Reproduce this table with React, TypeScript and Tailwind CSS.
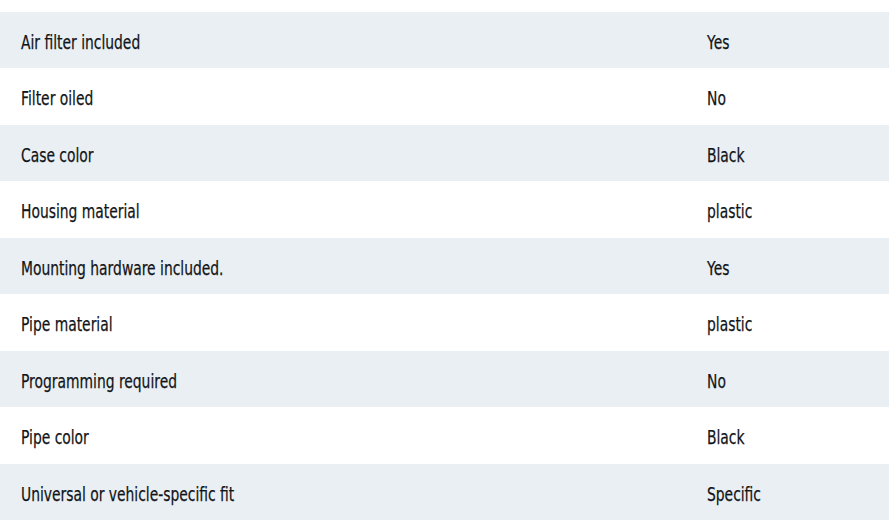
const rows: [string, string][] = [
  ["Air filter included", "Yes"],
  ["Filter oiled", "No"],
  ["Case color", "Black"],
  ["Housing material", "plastic"],
  ["Mounting hardware included.", "Yes"],
  ["Pipe material", "plastic"],
  ["Programming required", "No"],
  ["Pipe color", "Black"],
  ["Universal or vehicle-specific fit", "Specific"],
];

export default function App() {
  return (
    <div className="w-[889px] h-[520px] overflow-hidden bg-white pt-[11.5px]">
      <table className="w-full border-collapse font-['DejaVu_Sans',sans-serif] text-[19px] text-[#111418] [-webkit-text-stroke:0.25px_#111418]">
        <tbody>
          {rows.map(([label, value], idx) => (
            <tr key={label} className={idx % 2 === 0 ? "bg-[#eaeff3]" : "bg-white"}>
              <td className="h-[56.5px] pl-[21px] pt-[4px] align-middle">
                {/* narrow the type to match the condensed face */}
                <span className="inline-block origin-left scale-x-[0.73] whitespace-nowrap">{label}</span>
              </td>
              <td className="h-[56.5px] w-[182px] pt-[4px] align-middle">
                <span className="inline-block origin-left scale-x-[0.73] whitespace-nowrap">{value}</span>
              </td>
            </tr>
          ))}
        </tbody>
      </table>
    </div>
  );
}
